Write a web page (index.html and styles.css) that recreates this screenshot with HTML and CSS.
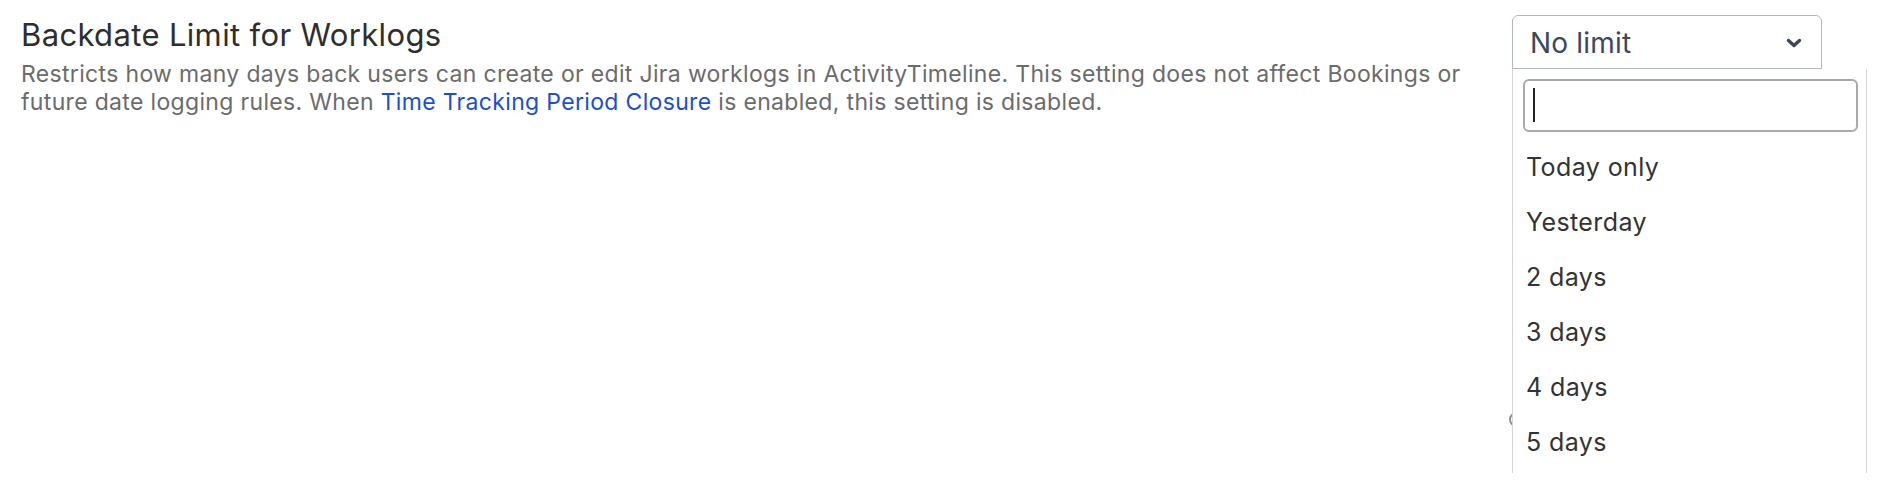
FILE: index.html
```html
<!DOCTYPE html>
<html lang="en">
<head>
    <meta charset="UTF-8">
    <meta name="viewport" content="width=device-width, initial-scale=1.0">
    <title>Worklog Settings</title>
    <link rel="stylesheet" href="styles.css">
</head>
<body>
    <div class="setting">
        <div class="setting-info">
            <h2 class="setting-title">Backdate Limit for Worklogs</h2>
            <p class="setting-desc">Restricts how many days back users can create or edit Jira worklogs in ActivityTimeline. This setting does not affect Bookings or future date logging rules. When <a href="#" class="link">Time Tracking Period Closure</a> is enabled, this setting is disabled.</p>
        </div>

        <div class="setting-control">
            <div class="select-wrap">
                <div class="select">
                    <span class="select-value">No limit</span>
                    <svg class="select-arrow" width="16" height="10" viewBox="0 0 16 10">
                        <polyline points="2.5,2.5 8,7.5 13.5,2.5" fill="none" stroke="#3c4862" stroke-width="3.4" stroke-linecap="round" stroke-linejoin="round"/>
                    </svg>
                </div>
                <div class="dropdown">
                    <div class="search-box"><span class="caret"></span></div>
                    <ul class="options">
                        <li>Today only</li>
                        <li>Yesterday</li>
                        <li>2 days</li>
                        <li>3 days</li>
                        <li>4 days</li>
                        <li>5 days</li>
                    </ul>
                </div>
            </div>
            <span class="help-icon"></span>
        </div>
    </div>
</body>
</html>
```

FILE: styles.css
```css
html,
body {
    min-height: 100vh;
}

body {
    margin: 0;
    font-family: Inter, "Noto Sans", Arial, sans-serif;
    background: #fff;
}

.setting {
    display: flex;
    padding: 15px 0 0 21px;
}

.setting-info {
    width: 1470px;
    flex-shrink: 0;
}

.setting-title {
    margin: 2px 0 0;
    font-size: 31px;
    line-height: 36px;
    letter-spacing: 0.35px;
    font-weight: 400;
    color: #2e2e2e;
}

.setting-desc {
    margin: 7px 0 0;
    font-size: 23px;
    line-height: 28px;
    letter-spacing: 0.33px;
    color: #6b6b6b;
}

.link {
    color: #1c4fcc;
    text-decoration: none;
}

.setting-control {
    margin-left: 21px;
    display: flex;
    flex-direction: column;
}

.select-wrap {
    position: relative;
    width: 310px;
    z-index: 10;
}

.select {
    box-sizing: border-box;
    height: 54px;
    display: flex;
    align-items: center;
    justify-content: space-between;
    padding: 2px 19px 0 17px;
    border: 1px solid #b1b8c4;
    border-radius: 6px 6px 0 0;
    font-size: 28px;
    letter-spacing: 0.2px;
    color: #3c4862;
}

.dropdown {
    position: absolute;
    top: 100%;
    left: 0;
    box-sizing: border-box;
    width: 355px;
    height: 404px;
    padding: 10px 8px 0 10px;
    background: #fff;
    border-left: 1px solid #d4d4d4;
    border-right: 1px solid #d4d4d4;
    overflow: hidden;
}

.search-box {
    box-sizing: border-box;
    height: 53px;
    border: 2px solid #a9a9a9;
    border-radius: 6px;
    padding: 7px 0 0 8px;
}

.caret {
    display: block;
    width: 2px;
    height: 34px;
    background: #222;
}

.options {
    list-style: none;
    margin: 8px 0 0;
    padding: 0;
}

.options li {
    padding: 12px 3px;
    font-size: 25px;
    line-height: 31px;
    letter-spacing: 0.4px;
    color: #333;
}

.help-icon {
    box-sizing: border-box;
    width: 15px;
    height: 15px;
    margin: 343px 0 0 -3px;
    border: 2px solid #8c8c8c;
    border-radius: 50%;
}
```
